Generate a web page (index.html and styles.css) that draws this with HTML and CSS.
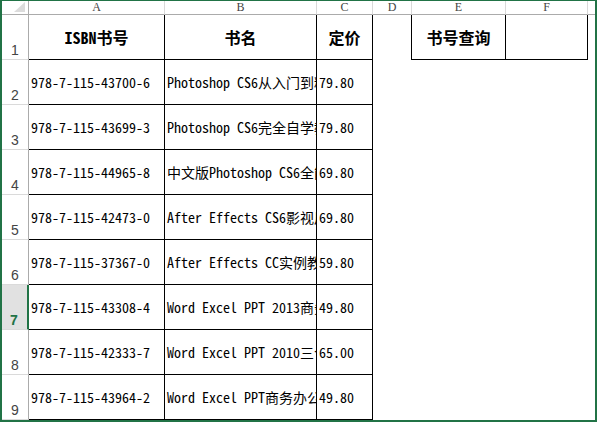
FILE: index.html
```html
<!DOCTYPE html>
<html lang="zh">
<head>
<meta charset="utf-8">
<title>书号查询</title>
<link rel="stylesheet" href="styles.css">
</head>
<body>
<div class="frame">
  <div class="sheet">
    <div class="hd corner"><svg class="tri" width="12" height="11" viewBox="0 0 12 11"><polygon points="11,0 11,10 0,10" fill="#dcdcdc"/></svg></div>
    <div class="hd col">A</div>
    <div class="hd col">B</div>
    <div class="hd col">C</div>
    <div class="hd col">D</div>
    <div class="hd col">E</div>
    <div class="hd col">F</div>
    <div class="hd col last"></div>

    <div class="rh">1</div>
    <div class="c tb th">ISBN书号</div>
    <div class="c tb th">书名</div>
    <div class="c tb th">定价</div>
    <div class="c dr"></div>
    <div class="c tb th">书号查询</div>
    <div class="c tb"></div>
    <div class="c"></div>

    <div class="rh">2</div>
    <div class="c tb">978-7-115-43700-6</div>
    <div class="c tb">Photoshop CS6从入门到精通</div>
    <div class="c tb">79.80</div>
    <div class="c"></div><div class="c"></div><div class="c"></div><div class="c"></div>

    <div class="rh">3</div>
    <div class="c tb">978-7-115-43699-3</div>
    <div class="c tb">Photoshop CS6完全自学教程</div>
    <div class="c tb">79.80</div>
    <div class="c"></div><div class="c"></div><div class="c"></div><div class="c"></div>

    <div class="rh">4</div>
    <div class="c tb">978-7-115-44965-8</div>
    <div class="c tb">中文版Photoshop CS6全能一本通</div>
    <div class="c tb">69.80</div>
    <div class="c"></div><div class="c"></div><div class="c"></div><div class="c"></div>

    <div class="rh">5</div>
    <div class="c tb">978-7-115-42473-0</div>
    <div class="c tb">After Effects CS6影视后期制作</div>
    <div class="c tb">69.80</div>
    <div class="c"></div><div class="c"></div><div class="c"></div><div class="c"></div>

    <div class="rh">6</div>
    <div class="c tb">978-7-115-37367-0</div>
    <div class="c tb">After Effects CC实例教程</div>
    <div class="c tb">59.80</div>
    <div class="c"></div><div class="c"></div><div class="c"></div><div class="c"></div>

    <div class="rh sel">7</div>
    <div class="c tb">978-7-115-43308-4</div>
    <div class="c tb">Word Excel PPT 2013商务办公从新手到高手</div>
    <div class="c tb">49.80</div>
    <div class="c"></div><div class="c"></div><div class="c"></div><div class="c"></div>

    <div class="rh">8</div>
    <div class="c tb">978-7-115-42333-7</div>
    <div class="c tb">Word Excel PPT 2010三合一办公</div>
    <div class="c tb">65.00</div>
    <div class="c"></div><div class="c"></div><div class="c"></div><div class="c"></div>

    <div class="rh">9</div>
    <div class="c tb">978-7-115-43964-2</div>
    <div class="c tb">Word Excel PPT商务办公从入门到精通</div>
    <div class="c tb">49.80</div>
    <div class="c"></div><div class="c"></div><div class="c"></div><div class="c"></div>
  </div>
</div>
</body>
</html>
```

FILE: styles.css
```css
* { box-sizing: border-box; }
html, body { margin: 0; padding: 0; background: #fff; }
body { width: 597px; height: 423px; overflow: hidden; }

.frame {
  width: 597px;
  height: 422px;
  border-style: solid;
  border-color: #217346;
  border-width: 1px 2px 2px 2px;
  background: #fff;
  overflow: hidden;
}

.sheet {
  display: grid;
  grid-template-columns: 27px 136px 152px 56px 39px 94px 82px 1fr;
  grid-template-rows: 14px repeat(9, 45px);
}

.hd {
  border-right: 1px solid #d9d9d9;
  border-bottom: 1px solid #ababab;
  font-family: "Liberation Serif", serif;
  font-size: 12px;
  line-height: 13px;
  color: #444;
  text-align: center;
}
.hd.corner { border-right: 1px solid #ababab; position: relative; }
.hd.last { border-right: none; }
.tri { position: absolute; right: 2px; top: 1px; }

.rh {
  border-right: 1px solid #ababab;
  border-bottom: 1px solid #dadada;
  font-family: "Liberation Sans", Arial, sans-serif;
  font-size: 14px;
  color: #444;
  display: flex;
  align-items: flex-end;
  justify-content: center;
  padding-bottom: 1px;
  line-height: 16px;
}
.rh.sel {
  background: #e1e1e1;
  border-right: 2px solid #217346;
  color: #217346;
  font-weight: bold;
  padding-right: 1px;
}

.c {
  font-family: "Noto Sans Mono CJK SC", "Liberation Mono", "Noto Sans CJK SC", monospace;
  font-size: 14px;
  color: #000;
  white-space: nowrap;
  overflow: hidden;
  display: flex;
  align-items: center;
  padding: 0 2px;
}
.c.tb {
  border-right: 1px solid #000;
  border-bottom: 1px solid #000;
}
.c.dr { border-right: 1px solid #000; }
.c.th {
  font-size: 16px;
  font-weight: bold;
  justify-content: center;
}
```
